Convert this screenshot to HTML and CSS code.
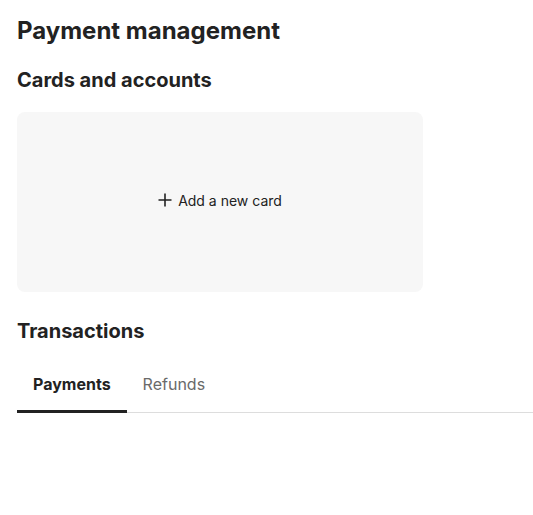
FILE: index.html
```
<!DOCTYPE html>
<html>
<head>
<meta charset="utf-8">
<link rel="stylesheet" href="styles.css">
</head>
<body>
<main class="page">
  <h1 class="title">Payment management</h1>
  <h2 class="section-title">Cards and accounts</h2>
  <div class="card-box">
    <button class="add-card">
      <svg class="plus" width="14" height="14" viewBox="0 0 14 14"><path d="M7 0.5V13.5M0.5 7H13.5" stroke="#222" stroke-width="1.6" fill="none"/></svg>
      <span>Add a new card</span>
    </button>
  </div>
  <h2 class="section-title transactions">Transactions</h2>
  <nav class="tabs">
    <div class="tab active">Payments</div>
    <div class="tab">Refunds</div>
  </nav>
</main>
</body>
</html>
```
FILE: styles.css
```
* { box-sizing: border-box; }
body {
  margin: 0;
  background: #fff;
  font-family: Inter, "Noto Sans", sans-serif;
  color: #222;
}
.page {
  padding: 16px 0 0 17px;
}
.title {
  margin: 0;
  font-size: 24px;
  font-weight: 700;
  line-height: 30px;
}
.section-title {
  margin: 20px 0 0;
  font-size: 20px;
  font-weight: 700;
  line-height: 28px;
}
.card-box {
  margin-top: 18px;
  width: 406px;
  height: 180px;
  padding-bottom: 4px;
  background: #f7f7f7;
  border-radius: 8px;
  display: flex;
  align-items: center;
  justify-content: center;
}
.add-card {
  border: 0;
  background: none;
  display: flex;
  align-items: center;
  gap: 6px;
  font-family: inherit;
  font-size: 14px;
  color: #222;
  padding: 0;
  cursor: pointer;
}
.transactions {
  margin-top: 25px;
}
.tabs {
  margin-top: 14px;
  display: flex;
  border-bottom: 1px solid #ddd;
}
.tab {
  padding: 14px 16px 15px;
  font-size: 16px;
  line-height: 22px;
  color: #6a6a6a;
  margin-bottom: -1px;
  border-bottom: 3px solid transparent;
}
.tab.active {
  color: #222;
  font-weight: 700;
  border-bottom-color: #222;
}
```
